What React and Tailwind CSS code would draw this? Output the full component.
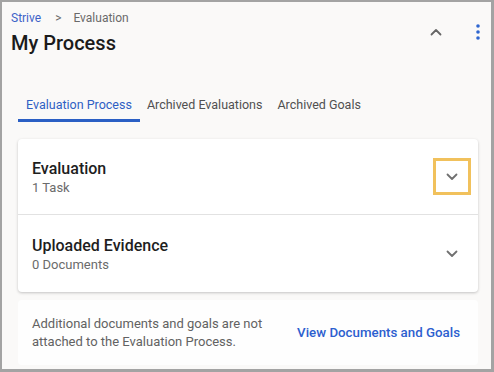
import React from "react";

function ChevronDown({ className = "" }) {
  return (
    <svg width="12" height="8" viewBox="0 0 12 8" className={className}>
      <path d="M1.5 1.5 L6 6 L10.5 1.5" fill="none" stroke="#707070" strokeWidth="1.8" strokeLinecap="round" strokeLinejoin="round" />
    </svg>
  );
}

function ChevronUp() {
  return (
    <svg width="12" height="8" viewBox="0 0 12 8">
      <path d="M1.5 6.5 L6 2 L10.5 6.5" fill="none" stroke="#666666" strokeWidth="1.8" strokeLinecap="round" strokeLinejoin="round" />
    </svg>
  );
}

function Kebab() {
  return (
    <svg width="4" height="16" viewBox="0 0 4 16">
      <circle cx="2" cy="2" r="1.8" fill="#2f66d0" />
      <circle cx="2" cy="8" r="1.8" fill="#2f66d0" />
      <circle cx="2" cy="14" r="1.8" fill="#2f66d0" />
    </svg>
  );
}

export default function App() {
  return (
    <div className="w-[494px] h-[372px] border-t-2 border-l-2 border-r-[3px] border-b-[3px] border-[#a3a3a3] bg-[#faf9f8] font-['Roboto',sans-serif] overflow-hidden">
      <div className="flex justify-between pl-[9px] pr-[11px]">
        <div className="pt-[8px]">
          <div className="flex items-center text-[12px] leading-[16px]">
            <span className="text-[#3d62c8]">Strive</span>
            <span className="text-[#6a6a6a] ml-[14px] mr-[12px] text-[12px]">&gt;</span>
            <span className="text-[#6a6a6a]">Evaluation</span>
          </div>
          <div className="mt-[3px] text-[20px] leading-[28px] font-medium text-[#1b1b1b]">My Process</div>
        </div>
        <div className="flex items-center gap-[34px] pt-[22px] h-fit">
          <ChevronUp />
          <Kebab />
        </div>
      </div>

      <div className="ml-4 mt-[40px] flex text-[12.5px] leading-[16px]">
        <div className="px-[8px] pb-[6px] border-b-[3px] border-[#2a5fc4] text-[#2f5fc4]">Evaluation Process</div>
        <div className="px-[7px] pb-[6px] text-[#505050]">Archived Evaluations</div>
        <div className="px-[8px] pb-[6px] text-[#505050]">Archived Goals</div>
      </div>

      <div className="ml-4 mr-[13px] mt-[17px] bg-white rounded-[4px] shadow-[0_1px_3px_rgba(0,0,0,0.22)]">
        <div className="flex items-center justify-between pl-[14px] pr-[7px] h-[76px] border-b border-[#e2e2e2]">
          <div className="pt-[1px]">
            <div className="text-[16px] leading-[20px] font-medium text-[#1e1e1e]">Evaluation</div>
            <div className="mt-[1px] text-[13px] leading-[16px] text-[#6b6b6b]">1 Task</div>
          </div>
          <div className="w-[38px] h-[37px] border-[3px] border-[#f1c15c] flex items-center justify-center">
            <ChevronDown />
          </div>
        </div>
        <div className="flex items-center justify-between pl-[14px] pr-[7px] h-[77px]">
          <div className="pt-[1px]">
            <div className="text-[16px] leading-[20px] font-medium text-[#1e1e1e]">Uploaded Evidence</div>
            <div className="mt-[1px] text-[13px] leading-[16px] text-[#6b6b6b]">0 Documents</div>
          </div>
          <div className="w-[38px] h-[37px] flex items-center justify-center">
            <ChevronDown />
          </div>
        </div>
      </div>

      <div className="ml-4 mr-[13px] mt-[8px] h-[65px] bg-[#fefefe] rounded-[4px] flex items-center justify-between pl-[14px] pr-[18px]">
        <div className="text-[13px] leading-[18px] text-[#626262]">
          Additional documents and goals are not
          <br />
          attached to the Evaluation Process.
        </div>
        <div className="text-[13.3px] leading-[16px] font-medium text-[#2d5fcf]">View Documents and Goals</div>
      </div>
    </div>
  );
}
